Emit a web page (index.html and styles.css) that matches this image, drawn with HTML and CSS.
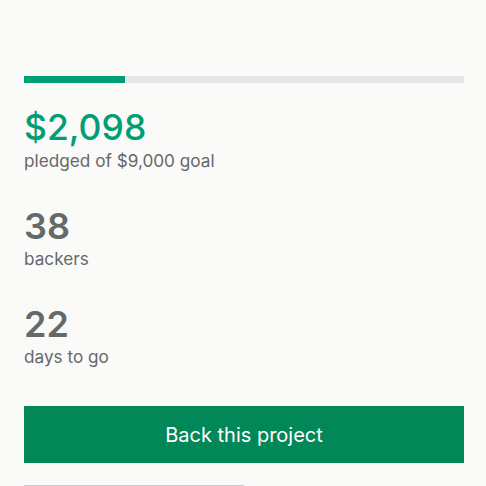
FILE: index.html
```html
<!DOCTYPE html>
<html lang="en">
<head>
<meta charset="utf-8">
<link rel="stylesheet" href="styles.css">
</head>
<body>
<main class="card">
  <div class="progress"><div class="progress-fill" style="width: 23%"></div></div>
  <div class="stats">
    <div class="stat">
      <div class="stat-value stat-value--green">$2,098</div>
      <div class="stat-label">pledged of $9,000 goal</div>
    </div>
    <div class="stat">
      <div class="stat-value">38</div>
      <div class="stat-label">backers</div>
    </div>
    <div class="stat">
      <div class="stat-value">22</div>
      <div class="stat-label">days to go</div>
    </div>
  </div>
  <button class="back-btn">Back this project</button>
  <div class="divider"></div>
</main>
</body>
</html>
```

FILE: styles.css
```css
html, body {
  margin: 0;
  padding: 0;
  background: #fafaf8;
  font-family: Inter, "Noto Sans", sans-serif;
}
.card {
  padding: 76px 22px 0 24px;
  display: flex;
  flex-direction: column;
}
.progress {
  height: 7px;
  background: #e6e6e6;
}
.progress-fill {
  height: 100%;
  background: #009e74;
}
.stats {
  display: flex;
  flex-direction: column;
  gap: 33px;
  margin-top: 23px;
}
.stat {
  display: flex;
  flex-direction: column;
}
.stat-value {
  font-size: 36px;
  font-weight: 600;
  line-height: 44px;
  color: #656969;
}
.stat-value--green {
  color: #009e74;
  font-weight: 500;
  font-size: 35.5px;
}
.stat-label {
  font-size: 17.2px;
  line-height: 21px;
  color: #656969;
}
.back-btn {
  margin-top: 39px;
  height: 57px;
  border: none;
  background: #028858;
  color: #ffffff;
  font-family: Inter, "Noto Sans", sans-serif;
  font-size: 20px;
  padding: 0;
}
.divider {
  margin-top: 22px;
  width: 220px;
  height: 1px;
  background: #cccccc;
}
```
